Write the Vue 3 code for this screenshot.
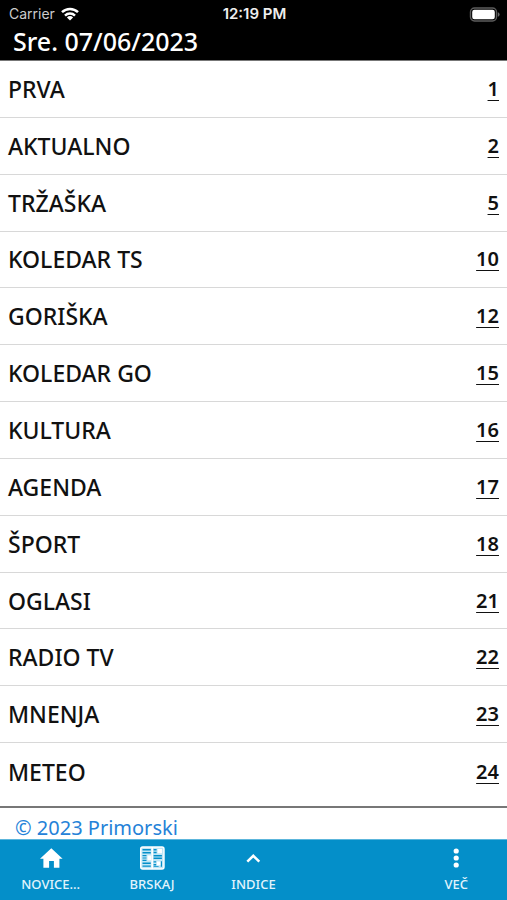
<script setup>
const sections = [
  { title: 'PRVA', page: 1 },
  { title: 'AKTUALNO', page: 2 },
  { title: 'TRŽAŠKA', page: 5 },
  { title: 'KOLEDAR TS', page: 10 },
  { title: 'GORIŠKA', page: 12 },
  { title: 'KOLEDAR GO', page: 15 },
  { title: 'KULTURA', page: 16 },
  { title: 'AGENDA', page: 17 },
  { title: 'ŠPORT', page: 18 },
  { title: 'OGLASI', page: 21 },
  { title: 'RADIO TV', page: 22 },
  { title: 'MNENJA', page: 23 },
  { title: 'METEO', page: 24 },
]
</script>

<template>
  <div class="screen">
    <header class="header">
      <div class="status">
        <div class="carrier">
          <span>Carrier</span>
          <svg class="wifi" viewBox="0 0 18 14" aria-hidden="true">
            <g fill="none" stroke="#fff" stroke-width="2.5">
              <path d="M1 5.2a11.6 11.6 0 0 1 16 0" />
              <path d="M4 8.6a7.2 7.2 0 0 1 10 0" />
            </g>
            <path d="M5.9 10.4a4.5 4.5 0 0 1 6.2 0L9 13.6z" fill="#fff" />
          </svg>
        </div>
        <time class="clock">12:19 PM</time>
        <svg class="battery" viewBox="0 0 31 15" aria-hidden="true">
          <rect x="1.5" y="1" width="26" height="13" rx="4" fill="none" stroke="#5c5c5c" stroke-width="1.4" />
          <rect x="3.2" y="2.8" width="22.6" height="9.4" rx="2.2" fill="#fff" />
          <path d="M28.8 5.2q1.8.6 1.8 2.3t-1.8 2.3z" fill="#6a6a6a" />
        </svg>
      </div>
      <h1 class="date">Sre. 07/06/2023</h1>
    </header>

    <main class="index">
      <ul class="list">
        <li v-for="s in sections" :key="s.title" class="row">
          <span class="title">{{ s.title }}</span>
          <a href="#" class="page">{{ s.page }}</a>
        </li>
      </ul>
      <p class="copyright"><a href="#">© 2023 Primorski</a></p>
    </main>

    <nav class="tabs">
      <button type="button" class="tab">
        <svg class="icon" viewBox="0 0 28 28" aria-hidden="true">
          <path d="M14.3 4.2 25.6 14.8H22.4V23.8H16.9V17H12.1V23.8H6.4V14.8H3z" fill="#fff" />
        </svg>
        <span>NOVICE...</span>
      </button>
      <button type="button" class="tab">
        <svg class="icon" viewBox="0 0 28 28" aria-hidden="true">
          <rect x="2.7" y="3" width="23.3" height="22" rx="2" fill="#bfe6f6" stroke="#fff" stroke-width="1.4" />
          <g fill="#048fc9">
            <path d="M4.5 5h8.3v1.6H4.5zM4.5 8h8.3v1.5H4.5zM4.5 11h4v1.2h-4zM4.5 13.4h4v1.2h-4zM4.5 15.8h4V17h-4zM4.5 18.6h8.3V20H4.5zM4.5 21.4h8.3v1.4H4.5z" />
            <path d="M15.6 5h3v1.5h-3zM15.6 7.8h3v1.5h-3zM15.6 11h8.3v1.4h-8.3zM15.6 13.6h8.3V15h-8.3zM15.6 17.2h2.6v1.4h-2.6zM15.6 20h2.6v1.4h-2.6zM22.8 17.2H24v5.6h-1.2zM15.6 22.2h5v.8h-5z" />
          </g>
          <path d="M9.5 11.4h3.6v4.8H9.5zM19.6 5h4.4v4.2h-4.4zM18.8 17.4h3.6v3.8h-3.6z" fill="#fff" />
          <path d="M14.2 3v22" stroke="#fff" stroke-width="1.6" />
        </svg>
        <span>BRSKAJ</span>
      </button>
      <button type="button" class="tab">
        <svg class="icon" viewBox="0 0 28 28" aria-hidden="true">
          <path d="M8.3 17.6 14.3 11.8 20.3 17.6" fill="none" stroke="#fff" stroke-width="2.5" />
        </svg>
        <span>INDICE</span>
      </button>
      <button type="button" class="tab last">
        <svg class="icon" viewBox="0 0 28 28" aria-hidden="true">
          <g fill="#fff">
            <circle cx="14.2" cy="7" r="2.6" />
            <circle cx="14.2" cy="14" r="2.6" />
            <circle cx="14.2" cy="21" r="2.6" />
          </g>
        </svg>
        <span>VEČ</span>
      </button>
    </nav>
  </div>
</template>

<style>
body {
  background: #fff;
}
</style>

<style scoped>
.screen {
  display: flex;
  flex-direction: column;
  min-height: 100vh;
  font-family: "Noto Sans", "Open Sans", sans-serif;
  color: #111;
}
.header {
  background: #000;
  color: #fff;
  border-bottom: 1px solid #777;
}
.status {
  display: grid;
  grid-template-columns: 1fr auto 1fr;
  align-items: center;
  padding: 5px 7px 0 9px;
  height: 18px;
  font-family: Inter, sans-serif;
  font-size: 14px;
  line-height: 18px;
}
.carrier {
  display: flex;
  align-items: center;
  gap: 6px;
  color: #ccc;
}
.wifi {
  width: 18px;
  height: 14px;
}
.clock {
  font-size: 15px;
  font-weight: 600;
  color: #eee;
}
.battery {
  justify-self: end;
  width: 31px;
  height: 15px;
}
.date {
  margin: 0;
  padding: 3px 13px 4px;
  font-size: 25px;
  font-weight: 500;
  line-height: 30px;
}
.index {
  flex: 1;
  display: flex;
  flex-direction: column;
}
.list {
  flex: 1;
  display: grid;
  grid-auto-rows: 1fr;
  margin: 0 0 6px;
  padding: 0;
  list-style: none;
}
.row {
  display: flex;
  align-items: center;
  justify-content: space-between;
  padding: 0 8px;
  border-bottom: 1px solid #d8d8d8;
}
.row:last-child {
  border-bottom: 0;
}
.title {
  font-size: 23px;
  font-weight: 500;
  line-height: 30px;
}
.page {
  color: #111;
  font-size: 20px;
  font-weight: 600;
  line-height: 28px;
  text-decoration-thickness: 1px;
  text-underline-offset: 4px;
}
.copyright {
  margin: 0;
  padding: 9px 15px 0;
  border-top: 2px solid #777;
  font-size: 20px;
  font-weight: 400;
  line-height: 22px;
}
.copyright a {
  color: #2582d8;
  text-decoration: none;
}
.tabs {
  display: grid;
  grid-template-columns: repeat(5, 1fr);
  background: #048fc9;
  border-top: 1px solid #5cb6dc;
}
.tab {
  display: flex;
  flex-direction: column;
  align-items: center;
  gap: 4px;
  padding: 4px 0 8px;
  border: 0;
  background: none;
  color: #e2f4fc;
  font-family: inherit;
  font-size: 13px;
  font-weight: 500;
  line-height: 16px;
}
.last {
  grid-column: 5;
}
.icon {
  width: 28px;
  height: 28px;
}
</style>
